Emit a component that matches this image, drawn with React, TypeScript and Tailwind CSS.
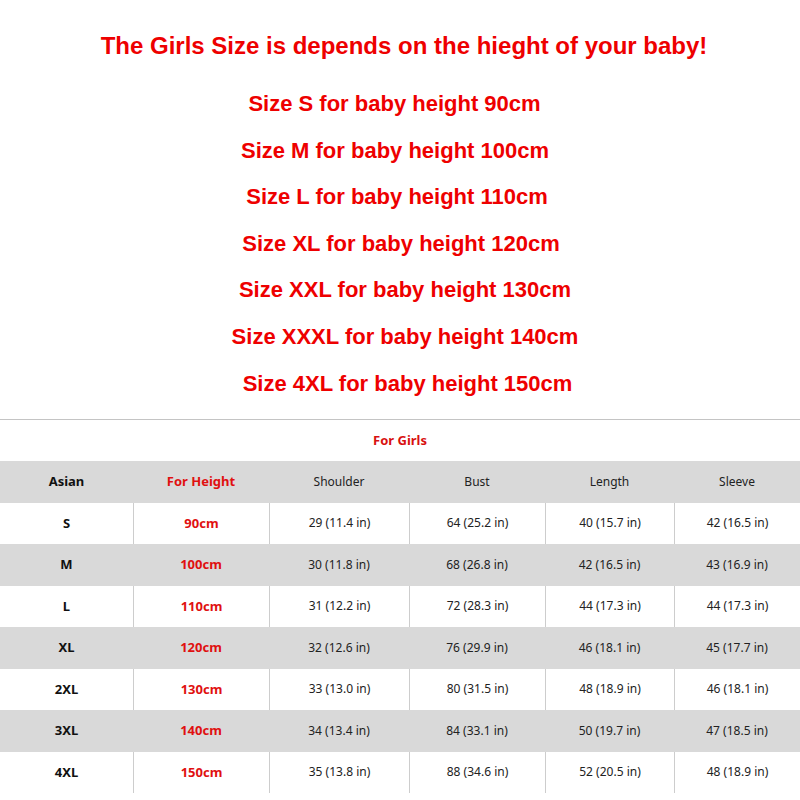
import React from 'react';

// each line sits a little off-center in the original picture
const lines = [
  { t: 'Size S for baby height 90cm', c: 'pr-[11px]' },
  { t: 'Size M for baby height 100cm', c: 'pr-[10px]' },
  { t: 'Size L for baby height 110cm', c: 'pr-[6px]' },
  { t: 'Size XL for baby height 120cm', c: 'pl-[2px]' },
  { t: 'Size XXL for baby height 130cm', c: 'pl-[10px]' },
  { t: 'Size XXXL for baby height 140cm', c: 'pl-[10px]' },
  { t: 'Size 4XL for baby height 150cm', c: 'pl-[15px]' },
];

const rows = [
  ['S', '90cm', '29 (11.4 in)', '64 (25.2 in)', '40 (15.7 in)', '42 (16.5 in)'],
  ['M', '100cm', '30 (11.8 in)', '68 (26.8 in)', '42 (16.5 in)', '43 (16.9 in)'],
  ['L', '110cm', '31 (12.2 in)', '72 (28.3 in)', '44 (17.3 in)', '44 (17.3 in)'],
  ['XL', '120cm', '32 (12.6 in)', '76 (29.9 in)', '46 (18.1 in)', '45 (17.7 in)'],
  ['2XL', '130cm', '33 (13.0 in)', '80 (31.5 in)', '48 (18.9 in)', '46 (18.1 in)'],
  ['3XL', '140cm', '34 (13.4 in)', '84 (33.1 in)', '50 (19.7 in)', '47 (18.5 in)'],
  ['4XL', '150cm', '35 (13.8 in)', '88 (34.6 in)', '52 (20.5 in)', '48 (18.9 in)'],
];

const cols = 'grid grid-cols-[133px_136px_140px_136px_129px_1fr]';

export default function App() {
  return (
    <div className="w-[800px] h-[800px] bg-white overflow-hidden">
      {/* size notes */}
      <div className="pt-[23px] font-['Liberation_Sans',Arial,sans-serif] font-bold text-[#ee0000] text-center">
        <div className="text-[24px] leading-[46px] pl-[8px]">The Girls Size is depends on the hieght of your baby!</div>
        <div className="mt-[12px] flex flex-col">
          {lines.map((l) => (
            <div key={l.t} className={`text-[22px] leading-[46.6px] ${l.c}`}>{l.t}</div>
          ))}
        </div>
      </div>

      {/* table */}
      <div className="mt-[12px] border-t border-[#c4c4c4] font-['Noto_Sans',sans-serif] text-[12px] text-[#222]">
        <div className="h-[41px] flex items-center justify-center text-[13px] font-bold text-[#d81010]">For Girls</div>
        <div className={`${cols} h-[41.5px] bg-[#d9d9d9] items-center text-center`}>
          <div className="font-bold text-[13px] text-[#111]">Asian</div>
          <div className="font-bold text-[13px] text-[#e01010]">For Height</div>
          <div>Shoulder</div>
          <div>Bust</div>
          <div>Length</div>
          <div>Sleeve</div>
        </div>
        {rows.map((r, i) => {
          const gray = i % 2 === 1;
          return (
            <div key={r[0]} className={`${cols} h-[41.5px] text-center ${gray ? 'bg-[#d9d9d9]' : 'bg-white'}`}>
              {r.map((c, j) => (
                <div
                  key={j}
                  className={`flex items-center justify-center ${j > 0 && !gray ? 'border-l border-[#cdcdcd]' : ''} ${j === 0 ? 'font-bold text-[13px] text-[#111]' : ''} ${j === 1 ? 'font-bold text-[13px] text-[#e01010]' : ''}`}
                >
                  {c}
                </div>
              ))}
            </div>
          );
        })}
      </div>
    </div>
  );
}
